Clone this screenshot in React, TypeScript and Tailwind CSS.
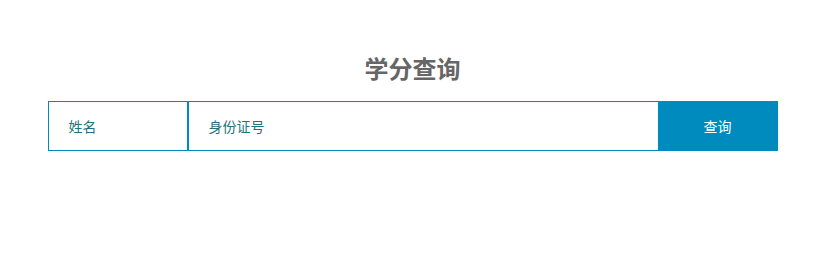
import React from "react";

export default function App() {
  return (
    <div
      className="w-[825px] h-[254px] bg-white"
      style={{ fontFamily: '"Noto Sans CJK SC", "Noto Sans", sans-serif' }}
    >
      <div className="pt-[52px] text-center text-[24px] leading-[32px] font-bold text-[#666666]">
        学分查询
      </div>
      <div className="mt-[17px] mx-auto w-[730px] h-[50px] flex">
        <div className="w-[140px] h-full border border-[#0089bf] flex items-center pl-[20px] text-[14px] text-[#25737a]">
          姓名
        </div>
        <div className="flex-1 h-full border border-r-0 border-[#0089bf] flex items-center pl-[20px] text-[14px] text-[#25737a]">
          身份证号
        </div>
        <button className="w-[120px] h-full bg-[#008bbf] text-white text-[14px] flex items-center justify-center">
          查询
        </button>
      </div>
    </div>
  );
}
